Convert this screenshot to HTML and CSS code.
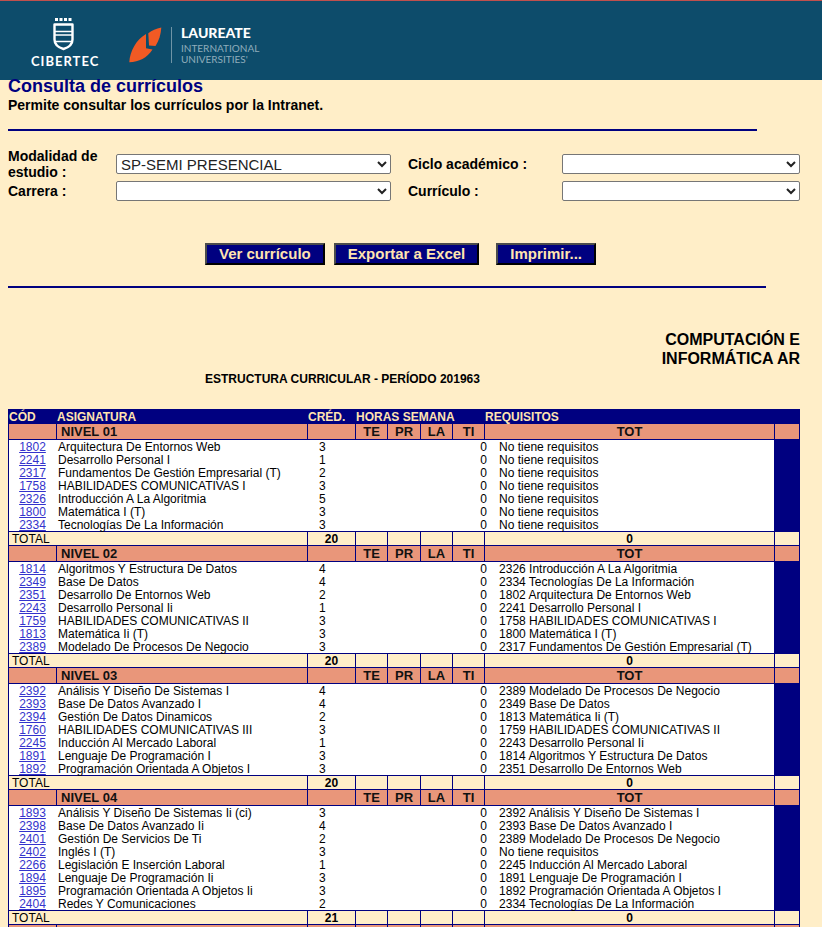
FILE: index.html
```html
<!DOCTYPE html>
<html lang="es">
<head>
<meta charset="utf-8">
<title>Consulta de currículos</title>
<link rel="stylesheet" href="styles.css">
</head>
<body>
<header class="banner">
  <svg class="logo-cibertec" width="68" height="52" viewBox="0 0 68 52" role="img" aria-label="Cibertec">
    <g fill="#fff">
      <rect x="24" y="2" width="3" height="3"/><rect x="28.500" y="2" width="3" height="3"/><rect x="33" y="2" width="3" height="3"/><rect x="37.500" y="2" width="3" height="3"/>
    </g>
    <path d="M23.500 8.500h18v15c0 5.500-4 8-9 9.500-5-1.500-9-4-9-9.500z" fill="none" stroke="#fff" stroke-width="2.400" stroke-linejoin="round"/>
    <path d="M24 15.500h17M24 19h17M24 25.500h17" stroke="#fff" stroke-width="1.500"/>
    <text x="0" y="50" class="cibertec-name">CIBERTEC</text>
  </svg>
  <svg class="logo-laureate" width="140" height="46" viewBox="0 0 140 46" role="img" aria-label="Laureate International Universities">
    <path d="M17 12C7 18 1 29 0.300 40.300 10 40 18 36 23.500 27.500L17 26.300z" fill="#f15a24"/>
    <path d="M32.300 5.500C27 6.500 23 8.500 19.300 11.300L20 23.500l6.500 0.500C30 18.500 32 12 32.300 5.500z" fill="#f15a24"/>
    <path d="M42.500 5v36" stroke="#6f94a6" stroke-width="1"/>
    <text x="52" y="16" class="laureate-name">LAUREATE</text>
    <text x="52" y="30" class="laureate-sub">INTERNATIONAL</text>
    <text x="52" y="41" class="laureate-sub">UNIVERSITIES'</text>
  </svg>
</header>
<main class="page">
  <h1>Consulta de currículos</h1>
  <p class="intro">Permite consultar los currículos por la Intranet.</p>
  <hr class="rule">
  <form class="query">
    <div class="fields">
      <label for="modalidad">Modalidad de estudio :</label>
      <select id="modalidad"><option>SP-SEMI PRESENCIAL</option></select>
      <label for="ciclo">Ciclo académico :</label>
      <select id="ciclo"><option></option></select>
      <label for="carrera">Carrera :</label>
      <select id="carrera"><option></option></select>
      <label for="curriculo">Currículo :</label>
      <select id="curriculo"><option></option></select>
    </div>
    <div class="actions">
      <button type="button">Ver currículo</button>
      <button type="button">Exportar a Excel</button>
      <button type="button" class="print">Imprimir...</button>
    </div>
  </form>
  <hr class="rule rule-wide">
  <h2>COMPUTACIÓN E<br>INFORMÁTICA AR</h2>
  <p class="period">ESTRUCTURA CURRICULAR - PERÍODO 201963</p>
  <table>
    <colgroup><col class="c-code"><col class="c-name"><col class="c-code"><col class="c-hour"><col class="c-lab"><col class="c-hour"><col class="c-hour"><col class="c-zero"><col><col class="c-end"></colgroup>
    <thead>
      <tr><th>CÓD</th><th>ASIGNATURA</th><th>CRÉD.</th><th colspan="4">HORAS SEMANA</th><th colspan="3">REQUISITOS</th></tr>
    </thead>
    <tbody>
      <tr class="level"><td></td><th>NIVEL 01</th><td></td><td>TE</td><td>PR</td><td>LA</td><td>TI</td><td colspan="2">TOT</td><td></td></tr>
      <tr class="course"><td><a href="#1802">1802</a></td><td>Arquitectura De Entornos Web</td><td>3</td><td colspan="5">0</td><td>No tiene requisitos</td><td></td></tr>
      <tr class="course"><td><a href="#2241">2241</a></td><td>Desarrollo Personal I</td><td>1</td><td colspan="5">0</td><td>No tiene requisitos</td><td></td></tr>
      <tr class="course"><td><a href="#2317">2317</a></td><td>Fundamentos De Gestión Empresarial (T)</td><td>2</td><td colspan="5">0</td><td>No tiene requisitos</td><td></td></tr>
      <tr class="course"><td><a href="#1758">1758</a></td><td>HABILIDADES COMUNICATIVAS I</td><td>3</td><td colspan="5">0</td><td>No tiene requisitos</td><td></td></tr>
      <tr class="course"><td><a href="#2326">2326</a></td><td>Introducción A La Algoritmia</td><td>5</td><td colspan="5">0</td><td>No tiene requisitos</td><td></td></tr>
      <tr class="course"><td><a href="#1800">1800</a></td><td>Matemática I (T)</td><td>3</td><td colspan="5">0</td><td>No tiene requisitos</td><td></td></tr>
      <tr class="course"><td><a href="#2334">2334</a></td><td>Tecnologías De La Información</td><td>3</td><td colspan="5">0</td><td>No tiene requisitos</td><td></td></tr>
      <tr class="total"><td colspan="2">TOTAL</td><td>20</td><td></td><td></td><td></td><td></td><td colspan="2">0</td><td></td></tr>
    </tbody>
    <tbody>
      <tr class="level"><td></td><th>NIVEL 02</th><td></td><td>TE</td><td>PR</td><td>LA</td><td>TI</td><td colspan="2">TOT</td><td></td></tr>
      <tr class="course"><td><a href="#1814">1814</a></td><td>Algoritmos Y Estructura De Datos</td><td>4</td><td colspan="5">0</td><td>2326 Introducción A La Algoritmia</td><td></td></tr>
      <tr class="course"><td><a href="#2349">2349</a></td><td>Base De Datos</td><td>4</td><td colspan="5">0</td><td>2334 Tecnologías De La Información</td><td></td></tr>
      <tr class="course"><td><a href="#2351">2351</a></td><td>Desarrollo De Entornos Web</td><td>2</td><td colspan="5">0</td><td>1802 Arquitectura De Entornos Web</td><td></td></tr>
      <tr class="course"><td><a href="#2243">2243</a></td><td>Desarrollo Personal Ii</td><td>1</td><td colspan="5">0</td><td>2241 Desarrollo Personal I</td><td></td></tr>
      <tr class="course"><td><a href="#1759">1759</a></td><td>HABILIDADES COMUNICATIVAS II</td><td>3</td><td colspan="5">0</td><td>1758 HABILIDADES COMUNICATIVAS I</td><td></td></tr>
      <tr class="course"><td><a href="#1813">1813</a></td><td>Matemática Ii (T)</td><td>3</td><td colspan="5">0</td><td>1800 Matemática I (T)</td><td></td></tr>
      <tr class="course"><td><a href="#2389">2389</a></td><td>Modelado De Procesos De Negocio</td><td>3</td><td colspan="5">0</td><td>2317 Fundamentos De Gestión Empresarial (T)</td><td></td></tr>
      <tr class="total"><td colspan="2">TOTAL</td><td>20</td><td></td><td></td><td></td><td></td><td colspan="2">0</td><td></td></tr>
    </tbody>
    <tbody>
      <tr class="level"><td></td><th>NIVEL 03</th><td></td><td>TE</td><td>PR</td><td>LA</td><td>TI</td><td colspan="2">TOT</td><td></td></tr>
      <tr class="course"><td><a href="#2392">2392</a></td><td>Análisis Y Diseño De Sistemas I</td><td>4</td><td colspan="5">0</td><td>2389 Modelado De Procesos De Negocio</td><td></td></tr>
      <tr class="course"><td><a href="#2393">2393</a></td><td>Base De Datos Avanzado I</td><td>4</td><td colspan="5">0</td><td>2349 Base De Datos</td><td></td></tr>
      <tr class="course"><td><a href="#2394">2394</a></td><td>Gestión De Datos Dinamicos</td><td>2</td><td colspan="5">0</td><td>1813 Matemática Ii (T)</td><td></td></tr>
      <tr class="course"><td><a href="#1760">1760</a></td><td>HABILIDADES COMUNICATIVAS III</td><td>3</td><td colspan="5">0</td><td>1759 HABILIDADES COMUNICATIVAS II</td><td></td></tr>
      <tr class="course"><td><a href="#2245">2245</a></td><td>Inducción Al Mercado Laboral</td><td>1</td><td colspan="5">0</td><td>2243 Desarrollo Personal Ii</td><td></td></tr>
      <tr class="course"><td><a href="#1891">1891</a></td><td>Lenguaje De Programación I</td><td>3</td><td colspan="5">0</td><td>1814 Algoritmos Y Estructura De Datos</td><td></td></tr>
      <tr class="course"><td><a href="#1892">1892</a></td><td>Programación Orientada A Objetos I</td><td>3</td><td colspan="5">0</td><td>2351 Desarrollo De Entornos Web</td><td></td></tr>
      <tr class="total"><td colspan="2">TOTAL</td><td>20</td><td></td><td></td><td></td><td></td><td colspan="2">0</td><td></td></tr>
    </tbody>
    <tbody>
      <tr class="level"><td></td><th>NIVEL 04</th><td></td><td>TE</td><td>PR</td><td>LA</td><td>TI</td><td colspan="2">TOT</td><td></td></tr>
      <tr class="course"><td><a href="#1893">1893</a></td><td>Análisis Y Diseño De Sistemas Ii (ci)</td><td>3</td><td colspan="5">0</td><td>2392 Análisis Y Diseño De Sistemas I</td><td></td></tr>
      <tr class="course"><td><a href="#2398">2398</a></td><td>Base De Datos Avanzado Ii</td><td>4</td><td colspan="5">0</td><td>2393 Base De Datos Avanzado I</td><td></td></tr>
      <tr class="course"><td><a href="#2401">2401</a></td><td>Gestión De Servicios De Ti</td><td>2</td><td colspan="5">0</td><td>2389 Modelado De Procesos De Negocio</td><td></td></tr>
      <tr class="course"><td><a href="#2402">2402</a></td><td>Inglés I (T)</td><td>3</td><td colspan="5">0</td><td>No tiene requisitos</td><td></td></tr>
      <tr class="course"><td><a href="#2266">2266</a></td><td>Legislación E Inserción Laboral</td><td>1</td><td colspan="5">0</td><td>2245 Inducción Al Mercado Laboral</td><td></td></tr>
      <tr class="course"><td><a href="#1894">1894</a></td><td>Lenguaje De Programación Ii</td><td>3</td><td colspan="5">0</td><td>1891 Lenguaje De Programación I</td><td></td></tr>
      <tr class="course"><td><a href="#1895">1895</a></td><td>Programación Orientada A Objetos Ii</td><td>3</td><td colspan="5">0</td><td>1892 Programación Orientada A Objetos I</td><td></td></tr>
      <tr class="course"><td><a href="#2404">2404</a></td><td>Redes Y Comunicaciones</td><td>2</td><td colspan="5">0</td><td>2334 Tecnologías De La Información</td><td></td></tr>
      <tr class="total"><td colspan="2">TOTAL</td><td>21</td><td></td><td></td><td></td><td></td><td colspan="2">0</td><td></td></tr>
    </tbody>
    <tbody>
      <tr class="level"><td></td><th></th><td></td><td></td><td></td><td></td><td></td><td colspan="2"></td><td></td></tr>
    </tbody>
  </table>
</main>
</body>
</html>
```
FILE: styles.css
```css
* { box-sizing: border-box; }

html { overflow-x: hidden; scrollbar-width: none; }

body {
  margin: 0;
  background: #ffeec8;
  color: #000;
  font-family: "Liberation Sans", Arial, sans-serif;
}

.banner {
  display: flex;
  height: 80px;
  padding: 15px 31px 0;
  gap: 30px;
  border-top: 1px solid #c0504d;
  background: #0d4c6b;
}

.logo-laureate { margin-top: 6px; }
.cibertec-name { fill: #fff; font: bold 13px Lato, sans-serif; letter-spacing: 1px; }
.laureate-name { fill: #fff; font: 900 14px Lato, sans-serif; }
.laureate-sub { fill: #8fadbb; font: 10px Lato, sans-serif; }

.page { margin: -4px 22px 0 8px; position: relative; }

h1 { margin: 0; color: navy; font-size: 18px; line-height: 20px; }
.intro { margin: 1px 0 16px; font-size: 14px; font-weight: bold; line-height: 16px; }

.rule { margin: 0 43px 0 0; border: 0; height: 2px; background: navy; }
.rule-wide { margin-right: 34px; }

.fields {
  display: grid;
  grid-template-columns: 100px 275px 155px 1fr;
  column-gap: 8px;
  row-gap: 1px;
  align-items: center;
  margin-top: 17px;
  font-size: 14px;
  font-weight: bold;
  line-height: 16px;
}
.fields label:nth-of-type(even) { padding-left: 9px; }

select {
  width: 100%;
  height: 20px;
  padding: 0;
  border: 1px solid #767676;
  border-radius: 2px;
  background-color: #fff;
  color: #222;
  font: 15px "Liberation Sans", Arial, sans-serif;
}

.actions { display: flex; gap: 9px; margin: 42px 0 21px 197px; }
button {
  height: 22px;
  padding: 0 12px;
  border: 2px solid;
  border-color: #4c4c4c #000 #000 #4c4c4c;
  background: navy;
  color: #ffe4b0;
  font: bold 15px "Liberation Sans", Arial, sans-serif;
  line-height: 18px;
}
.print { margin-left: 8px; }

h2 { margin: 42px 0 4px; font-size: 16px; line-height: 19px; text-align: right; }
.period { margin: 0 0 23px 197px; font-size: 12px; font-weight: bold; line-height: 14px; }

table {
  width: 100%;
  table-layout: fixed;
  border-collapse: separate;
  border-spacing: 0;
  font-size: 12px;
}
.c-code { width: 48px; }
.c-name { width: 251px; }
.c-hour { width: 32px; }
.c-lab { width: 33px; }
.c-zero { width: 3px; }
.c-end { width: 26px; }

th, td { padding: 0; white-space: nowrap; font-weight: normal; text-align: center; }
thead th {
  height: 15px;
  padding: 1px 0 0 1px;
  background: navy;
  color: #ffe4b0;
  font-weight: bold;
  line-height: 14px;
  text-align: left;
}

tbody td, tbody th { border-left: 1px solid navy; }
tbody td:last-child { border-right: 1px solid navy; }

.level td, .level th {
  height: 16px;
  border-bottom: 1px solid navy;
  background: #e9967a;
  color: #111;
  font-size: 13px;
  font-weight: bold;
  line-height: 15px;
}
.level th { padding-left: 4px; text-align: left; }

.course td { height: 13px; padding-top: 1px; border-left: 0; background: #fff; line-height: 12px; }
.course td:first-child { border-left: 1px solid navy; }
.course td:nth-child(2) { padding-left: 2px; text-align: left; }
.course td:nth-child(3) { padding-left: 12px; text-align: left; }
.course td:nth-child(4) { text-align: right; }
.course td:nth-child(5) { padding-left: 12px; text-align: left; }
.course td:last-child { background: navy; }
.course a { color: #33c; }

.total td {
  height: 15px;
  padding-top: 1px;
  border-top: 1px solid navy;
  border-bottom: 1px solid navy;
  line-height: 12px;
  font-weight: bold;
}
.total td:first-child { padding-left: 3px; font-weight: normal; text-align: left; }
```
